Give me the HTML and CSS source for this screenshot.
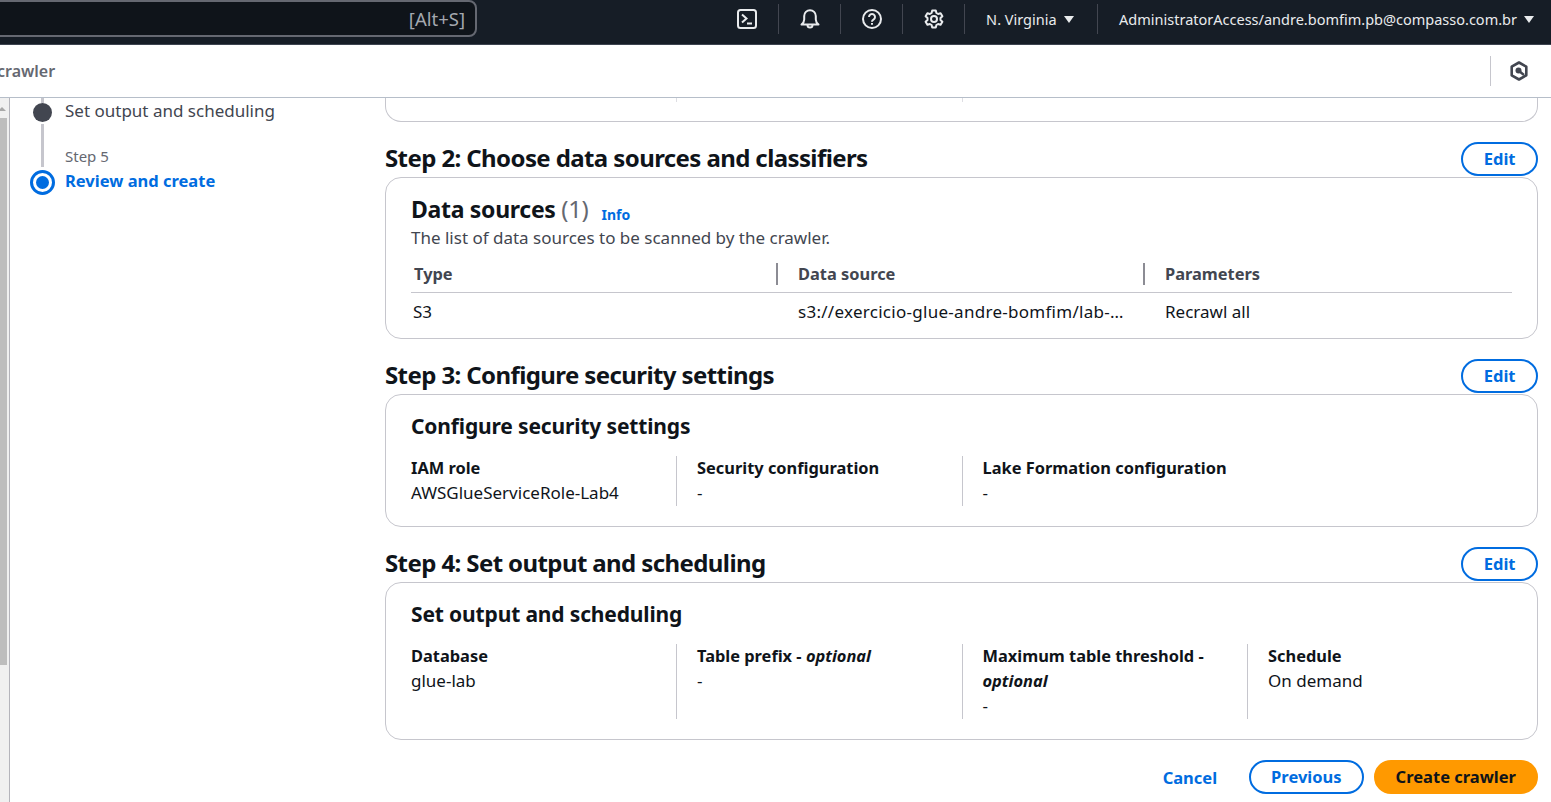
FILE: index.html
```html
<!DOCTYPE html>
<html>
  <head>
    <title>Create crawler</title>
    <link rel="stylesheet" href="styles.css">
  </head>

  <body>
    <header class="topbar">
      <div class="search"><span class="search-hint">[Alt+S]</span></div>
      <div class="top-items">
        <div class="top-item icon-item">
          <svg width="20" height="20" viewBox="0 0 20 20" fill="none" stroke="#e9ebed" stroke-width="2"><rect x="1" y="1" width="18" height="18" rx="2.5"/><path d="M5 5.500l4.500 4L5 13.500M10 14.500h5"/></svg>
        </div>
        <div class="top-item icon-item">
          <svg width="20" height="20" viewBox="0 0 20 20" fill="none" stroke="#e9ebed" stroke-width="2"><path d="M1.500 15.500h17c-1.800-1.500-2.700-3-2.700-5V7a5.800 5.800 0 0 0-11.600 0v3.500c0 2-.9 3.500-2.700 5z" stroke-linejoin="round"/><path d="M7.500 16a2.500 2.500 0 0 0 5 0"/></svg>
        </div>
        <div class="top-item icon-item">
          <svg width="20" height="20" viewBox="0 0 20 20" fill="none" stroke="#e9ebed" stroke-width="2"><circle cx="10" cy="10" r="9"/><path d="M7 8a3 3 0 1 1 4.500 2.600c-1 .6-1.500 1-1.500 2.100"/><path d="M10 14v1.800"/></svg>
        </div>
        <div class="top-item icon-item">
          <svg width="20" height="20" viewBox="0 0 20 20" fill="none" stroke="#e9ebed" stroke-width="2" stroke-linejoin="round"><circle cx="10" cy="10" r="3"/><path d="M8.200 1.500h3.600l.6 2.500 1.700 1 2.500-.8 1.800 3.100-1.900 1.800v1.800l1.900 1.800-1.800 3.100-2.500-.8-1.700 1-.6 2.500H8.200l-.6-2.500-1.700-1-2.500.8-1.800-3.100 1.900-1.800V9.100L1.600 7.300l1.800-3.100 2.500.8 1.700-1z"/></svg>
        </div>
        <div class="top-item region">N. Virginia <span class="caret"></span></div>
        <div class="top-item account">AdministratorAccess/andre.bomfim.pb@compasso.com.br <span class="caret"></span></div>
      </div>
    </header>

    <div class="subbar">
      <span class="crumb">crawler</span>
      <div class="subbar-right">
        <svg width="20" height="20" viewBox="0 0 20 20" fill="none" stroke="#424650" stroke-linejoin="round"><path d="M10 1.500l7.300 4.200v8.600L10 18.500l-7.300-4.200V5.700z" stroke-width="2.600"/><circle cx="9.500" cy="9.500" r="3" fill="#424650" stroke="none"/><path d="M10 10l5 4" stroke-width="2.400"/></svg>
      </div>
    </div>

    <div class="layout">
      <div class="scrollbar"><span class="scroll-arrow"></span><div class="scroll-thumb"></div></div>

      <nav class="steps">
        <div class="markers">
          <span class="line stub"></span>
          <span class="dot"></span>
          <span class="line long"></span>
          <span class="ring"><span class="ring-dot"></span></span>
        </div>
        <div class="labels">
          <div class="step-text">Set output and scheduling</div>
          <div class="step-num">Step 5</div>
          <div class="step-active">Review and create</div>
        </div>
      </nav>

      <main class="content">
        <div class="card card-tail">
          <div class="tail-col"></div>
          <div class="tail-col"></div>
        </div>

        <div class="step-head">
          <h2>Step 2: Choose data sources and classifiers</h2>
          <button class="btn">Edit</button>
        </div>
        <section class="card sources">
          <div class="sources-title"><h3>Data sources <span class="count">(1)</span></h3><a class="info">Info</a></div>
          <p class="sources-desc">The list of data sources to be scanned by the crawler.</p>
          <div class="table">
            <div class="th first">Type</div>
            <div class="th"><span class="th-sep"></span>Data source</div>
            <div class="th"><span class="th-sep"></span>Parameters</div>
            <div class="td first">S3</div>
            <div class="td path">s3://exercicio-glue-andre-bomfim/lab-…</div>
            <div class="td">Recrawl all</div>
          </div>
        </section>

        <div class="step-head">
          <h2>Step 3: Configure security settings</h2>
          <button class="btn">Edit</button>
        </div>
        <section class="card">
          <h3 class="card-title">Configure security settings</h3>
          <div class="cols">
            <div class="col"><div class="label">IAM role</div><div class="value">AWSGlueServiceRole-Lab4</div></div>
            <div class="col"><div class="label">Security configuration</div><div class="value">-</div></div>
            <div class="col"><div class="label">Lake Formation configuration</div><div class="value">-</div></div>
          </div>
        </section>

        <div class="step-head">
          <h2>Step 4: Set output and scheduling</h2>
          <button class="btn">Edit</button>
        </div>
        <section class="card">
          <h3 class="card-title">Set output and scheduling</h3>
          <div class="cols">
            <div class="col"><div class="label">Database</div><div class="value">glue-lab</div></div>
            <div class="col"><div class="label">Table prefix - <i>optional</i></div><div class="value">-</div></div>
            <div class="col"><div class="label">Maximum table threshold - <i>optional</i></div><div class="value">-</div></div>
            <div class="col"><div class="label">Schedule</div><div class="value">On demand</div></div>
          </div>
        </section>

        <div class="actions">
          <a class="cancel">Cancel</a>
          <button class="btn">Previous</button>
          <button class="btn primary">Create crawler</button>
        </div>
      </main>
    </div>
  </body>
</html>
```

FILE: styles.css
```css
* {
  box-sizing: border-box;
}
body {
  margin: 0;
  height: 802px;
  overflow: hidden;
  background: #fff;
  color: #0f141a;
  font-family: "Noto Sans", sans-serif;
  font-size: 17px;
}

/* top bar */
.topbar {
  height: 45px;
  background: #161d26;
  border-bottom: 1px solid #3d4450;
  display: flex;
  justify-content: space-between;
  align-items: flex-start;
}
.search {
  width: 487px;
  height: 37px;
  margin-left: -10px;
  background: #0f141a;
  border: 2px solid #656871;
  border-radius: 8px;
  display: flex;
  align-items: center;
  justify-content: flex-end;
  padding-right: 10px;
}
.search-hint {
  color: #a4a8af;
  font-size: 18.500px;
}
.top-items {
  display: flex;
  align-items: flex-start;
}
.top-item {
  display: flex;
  align-items: center;
  height: 30px;
  margin-top: 4px;
  color: #e9ebed;
  font-size: 14.500px;
  border-left: 1px solid #424650;
}
.top-item:first-child {
  border-left: none;
}
.icon-item {
  width: 62px;
  justify-content: center;
}
.region {
  width: 133px;
  padding-left: 21px;
  gap: 7px;
}
.account {
  padding: 0 17px 0 21px;
  gap: 7px;
  white-space: nowrap;
}
.caret {
  width: 0;
  height: 0;
  border-left: 5.500px solid transparent;
  border-right: 5.500px solid transparent;
  border-top: 7px solid #e9ebed;
}

/* sub bar */
.subbar {
  height: 53px;
  border-bottom: 1px solid #b6bec9;
  display: flex;
  align-items: center;
  justify-content: space-between;
}
.crumb {
  margin-left: -3px;
  color: #656871;
  font-size: 16px;
  font-weight: 600;
}
.subbar-right {
  border-left: 1px solid #c6c6cd;
  height: 30px;
  width: 61px;
  padding-right: 4px;
  display: flex;
  align-items: center;
  justify-content: center;
}

/* body */
.layout {
  display: flex;
  height: 704px;
}
.scrollbar {
  position: relative;
  width: 10px;
  border-right: 1px solid #b4b4bb;
  background: #f0f0f0;
  padding-top: 20px;
  flex-shrink: 0;
}
.scroll-arrow {
  position: absolute;
  left: -2px;
  top: 9px;
  border-left: 4px solid transparent;
  border-right: 4px solid transparent;
  border-bottom: 4px solid #a8a8a8;
}
.scroll-thumb {
  width: 7px;
  height: 547px;
  background: #bdbdbd;
}

/* wizard steps */
.steps {
  width: 375px;
  flex-shrink: 0;
  padding-left: 20px;
  display: flex;
  gap: 10px;
  align-items: flex-start;
}
.markers {
  width: 25px;
  display: flex;
  flex-direction: column;
  align-items: center;
}
.line {
  width: 3px;
  background: #c6c6cd;
}
.line.stub {
  height: 5px;
}
.line.long {
  height: 43px;
  margin: 2px 0 3px;
}
.dot {
  width: 19px;
  height: 19px;
  border-radius: 50%;
  background: #424650;
}
.ring {
  width: 25px;
  height: 25px;
  border-radius: 50%;
  border: 3px solid #006ce0;
  display: flex;
  align-items: center;
  justify-content: center;
}
.ring-dot {
  width: 13px;
  height: 13px;
  border-radius: 50%;
  background: #006ce0;
}
.step-text {
  color: #424650;
  line-height: 24px;
  margin-top: 1px;
}
.step-num {
  color: #656871;
  font-size: 15px;
  line-height: 20px;
  margin-top: 23px;
}
.step-active {
  color: #006ce0;
  font-size: 16.500px;
  font-weight: 700;
  line-height: 24px;
  margin-top: 3px;
}

/* main */
.content {
  width: 1153px;
  flex-shrink: 0;
}
.card {
  border: 1px solid #c6c6cd;
  border-radius: 16px;
  background: #fff;
  padding: 16px 25px 20px;
}
.card-tail {
  height: 24px;
  padding: 0;
  border-top: none;
  border-radius: 0 0 16px 16px;
  display: flex;
}
.tail-col {
  width: 291px;
  height: 4px;
  border-right: 1px solid #dedee3;
}
.tail-col:last-child {
  width: 286px;
}
.step-head {
  display: flex;
  justify-content: space-between;
  align-items: center;
  height: 34px;
  margin-top: 20px;
  margin-bottom: 1px;
}
.step-head h2 {
  margin: 0;
  padding-bottom: 2px;
  font-size: 24px;
  font-weight: 700;
  line-height: 30px;
  letter-spacing: -0.6px;
}
.btn {
  height: 34px;
  padding: 0 20.500px 2px;
  border: 2px solid #006ce0;
  border-radius: 20px;
  background: #fff;
  color: #006ce0;
  font-family: inherit;
  font-size: 16.500px;
  font-weight: 700;
}
.btn.primary {
  background: #ff9900;
  border-color: #ff9900;
  color: #0f141a;
}
.sources {
  height: 162px;
  padding: 14px 25px 0;
}
.sources-title {
  display: flex;
  align-items: baseline;
  gap: 13px;
}
.sources-title h3 {
  margin: 0;
  font-size: 23px;
  font-weight: 700;
  line-height: 34px;
  letter-spacing: -0.3px;
}
.count {
  color: #656871;
  font-size: 24px;
  font-weight: 400;
}
.info {
  align-self: flex-end;
  color: #006ce0;
  font-size: 14px;
  font-weight: 700;
  line-height: 22px;
}
.sources-desc {
  margin: 1px 0 0;
  color: #424650;
  line-height: 22px;
}
.table {
  display: grid;
  grid-template-columns: 365px 367px 1fr;
  margin-top: 14px;
}
.th {
  position: relative;
  height: 30px;
  padding-left: 22px;
  color: #424650;
  font-weight: 700;
  font-size: 16.400px;
  line-height: 22px;
  border-bottom: 1px solid #c6c6cd;
}
.th.first {
  padding-left: 3px;
}
.th-sep {
  position: absolute;
  left: 0;
  top: 0;
  width: 2px;
  height: 22px;
  background: #8c8c94;
}
.td {
  padding: 8px 0 0 22px;
  line-height: 22px;
  white-space: nowrap;
}
.td.first {
  padding-left: 2px;
}
.td.path {
  letter-spacing: 0.28px;
}
.card-title {
  margin: 0;
  font-size: 21px;
  font-weight: 700;
  line-height: 30px;
  letter-spacing: -0.15px;
}
.cols {
  display: grid;
  grid-template-columns: 265px 285.500px 285.500px 1fr;
  margin-top: 15px;
}
.col {
  padding: 0 20px 1px 20px;
  border-left: 1px solid #c6c6cd;
}
.col:first-child {
  padding-left: 0;
  border-left: none;
}
.label {
  margin-top: -1px;
  font-weight: 700;
  font-size: 16.400px;
  line-height: 25px;
}
.value {
  line-height: 25px;
}
.actions {
  display: flex;
  justify-content: flex-end;
  align-items: center;
  gap: 10px;
  margin-top: 20px;
}
.actions .btn {
  padding: 0 20px 2px;
}
.cancel {
  color: #006ce0;
  font-size: 16.500px;
  font-weight: 700;
  margin-right: 22px;
}
```
